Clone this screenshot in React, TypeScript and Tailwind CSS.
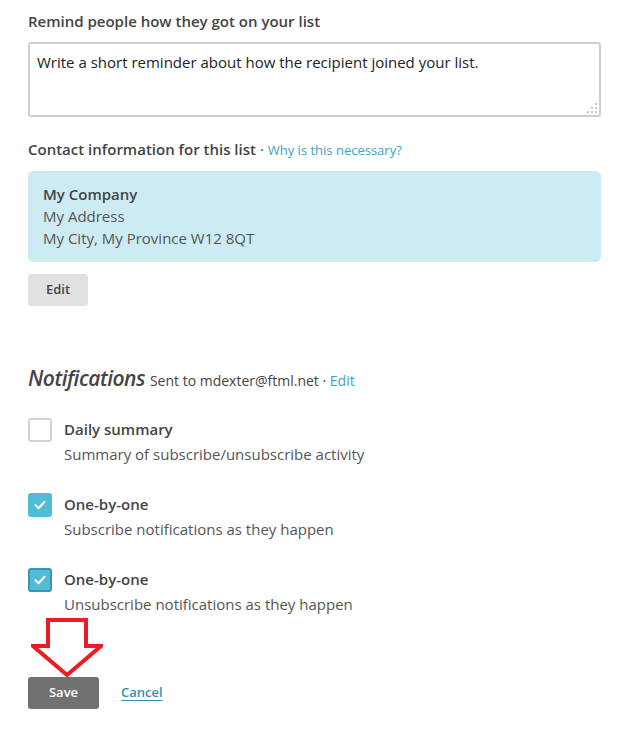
import React from 'react';

function Check({ checked, focused }: { checked: boolean; focused?: boolean }) {
  if (!checked) {
    return <div className="w-6 h-6 rounded-[3px] border-2 border-[#d2d2d2] bg-white flex-shrink-0" />;
  }
  return (
    <div
      className={`w-6 h-6 rounded-[3px] flex items-center justify-center flex-shrink-0 bg-[#52bcd8] ${
        focused ? 'border-2 border-[#3597b1]' : ''
      }`}
    >
      <svg width="12" height="10" viewBox="0 0 12 10" fill="none">
        <path d="M1.5 5.2 L4.6 8.2 L10.5 1.8" stroke="white" strokeWidth="2" strokeLinecap="round" strokeLinejoin="round" />
      </svg>
    </div>
  );
}

function Option({ title, desc, checked, focused }: { title: string; desc: string; checked: boolean; focused?: boolean }) {
  return (
    <div className="flex gap-3">
      <Check checked={checked} focused={focused} />
      <div>
        <div className="text-[15px] leading-[22px] font-semibold text-[#444]">{title}</div>
        <div className="text-[15px] leading-[22px] mt-[3px] text-[#555]">{desc}</div>
      </div>
    </div>
  );
}

export default function App() {
  return (
    <div className="w-[635px] h-[743px] bg-white px-[28px] pt-[11px] font-['Open_Sans',sans-serif] text-[#444]">
      {/* Reminder */}
      <div className="text-[15px] leading-[20px] font-semibold text-[#444]">Remind people how they got on your list</div>
      <div className="relative mt-[11px] w-[573px] h-[75px] border-2 border-[#cfcfcf] rounded-[3px] px-[7px] pt-[7px]">
        <div className="text-[15px] leading-[22px] text-[#222]">Write a short reminder about how the recipient joined your list.</div>
        <svg className="absolute right-[1px] bottom-[1px]" width="12" height="12" viewBox="0 0 12 12">
          <rect x="9" y="1" width="2" height="2" fill="#c8c8c8" />
          <rect x="5" y="5" width="2" height="2" fill="#c8c8c8" />
          <rect x="9" y="5" width="2" height="2" fill="#c8c8c8" />
          <rect x="1" y="9" width="2" height="2" fill="#c8c8c8" />
          <rect x="5" y="9" width="2" height="2" fill="#c8c8c8" />
          <rect x="9" y="9" width="2" height="2" fill="#c8c8c8" />
        </svg>
      </div>

      {/* Contact */}
      <div className="mt-[22px] text-[15px] leading-[20px] font-semibold text-[#444]">
        Contact information for this list <span className="font-normal">·</span>{' '}
        <span className="text-[13px] font-normal text-[#3ba3c4]">Why is this necessary?</span>
      </div>
      <div className="mt-[11px] w-[573px] h-[91px] bg-[#cdebf3] rounded-[5px] px-[15px] pt-[12px] text-[15px] leading-[22px] text-[#555]">
        <div className="font-semibold text-[#444]">My Company</div>
        <div>My Address</div>
        <div>My City, My Province W12 8QT</div>
      </div>
      <button className="mt-[12px] w-[60px] h-[32px] bg-[#e1e1e1] rounded-[3px] text-[13px] font-semibold text-[#444]">
        Edit
      </button>

      {/* Notifications */}
      <div className="mt-[58px] flex items-baseline gap-[5px]">
        <span className="text-[21px] leading-[28px] font-semibold italic text-[#444] tracking-[-0.5px]">Notifications</span>
        <span className="text-[14px] text-[#444]">
          Sent to mdexter@ftml.net · <span className="text-[#3ba3c4]">Edit</span>
        </span>
      </div>

      <div className="mt-[26px] flex flex-col gap-[28px]">
        <Option title="Daily summary" desc="Summary of subscribe/unsubscribe activity" checked={false} />
        <Option title="One-by-one" desc="Subscribe notifications as they happen" checked={true} />
        <Option title="One-by-one" desc="Unsubscribe notifications as they happen" checked={true} focused />
      </div>

      {/* Arrow + actions */}
      <div className="relative mt-[2px]">
        <svg className="ml-[3px] block" width="72" height="60" viewBox="0 0 72 60" fill="none">
          <path d="M17 3 H55 V29 H70 L36 58 L2 29 H17 Z" stroke="#ed1c24" strokeWidth="4" strokeLinejoin="miter" fill="white" />
        </svg>
        <div className="flex items-center gap-[22px]">
          <button className="w-[71px] h-[32px] bg-[#717171] rounded-[3px] text-[13px] font-semibold text-white">Save</button>
          <span className="text-[13px] font-semibold text-[#3590b0] underline underline-offset-[3px]">Cancel</span>
        </div>
      </div>
    </div>
  );
}
